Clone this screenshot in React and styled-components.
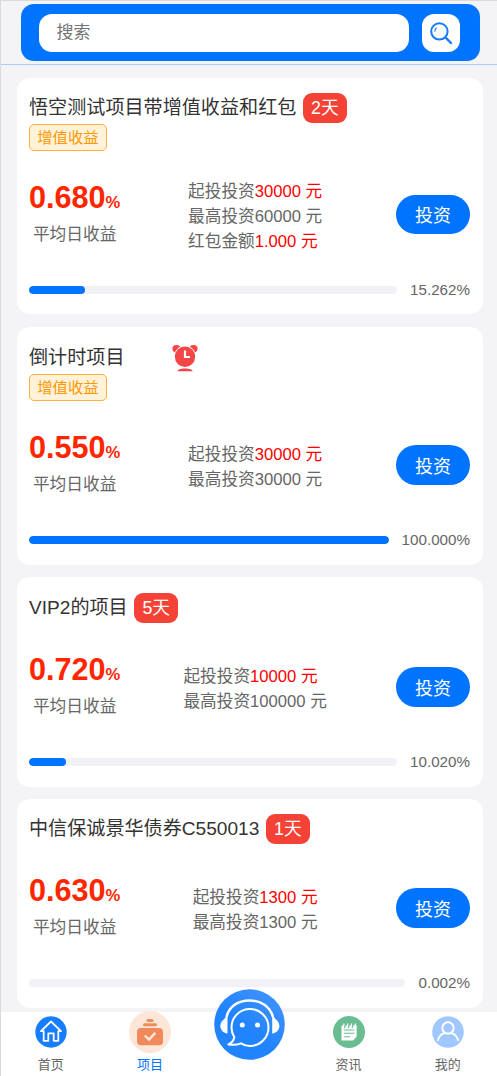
import React from 'react';
import styled, { createGlobalStyle, css } from 'styled-components';

const blue = '#0073ff';

const GlobalStyle = createGlobalStyle`
    * {
        box-sizing: border-box;
    }
    body {
        margin: 0;
        background: #f4f4f7;
        font-family: 'Liberation Sans', 'Noto Sans CJK SC', sans-serif;
        color: #666;
    }
`

const Page = styled.div`
    height: 1076px;
    display: flex;
    flex-direction: column;
    border-left: 1px solid #dcd8dc;
    border-top: 1px solid #dcd8dc;
    background: #f4f4f7;
    overflow: hidden;
`

const Header = styled.header`
    flex: none;
    height: 64px;
    padding: 3.3px 17.5px 0 19.5px;
    border-bottom: 1px solid #a9cef9;
`

const SearchBar = styled.div`
    height: 57px;
    display: flex;
    align-items: center;
    justify-content: space-between;
    padding: 0 19.5px 0 18.5px;
    border-radius: 13px;
    background: ${blue};
`

const SearchInput = styled.input`
    width: 370px;
    height: 38.5px;
    padding: 0 17.5px;
    border: 0;
    outline: none;
    border-radius: 13px;
    background: #fff;
    font-family: inherit;
    font-size: 17px;

    &::placeholder {
        color: #757575;
    }
`

const SearchButton = styled.button`
    width: 38.5px;
    height: 38.5px;
    display: flex;
    align-items: center;
    justify-content: center;
    padding: 0;
    border: 0;
    border-radius: 12px;
    background: #fff;
`

const List = styled.main`
    flex: 1;
    min-height: 0;
    display: flex;
    flex-direction: column;
    gap: 12.5px;
    padding: 13px 14px 0 16px;
    overflow: hidden;
`

const Card = styled.section`
    flex: none;
    height: ${({ size }) => size}px;
    display: flex;
    flex-direction: column;
    padding: 15.2px 13px 15.3px 12px;
    border-radius: 13px;
    background: #fff;
`

const TitleRow = styled.div`
    height: 30px;
    display: flex;
    align-items: center;
    margin-top: ${({ $offset = 0 }) => $offset}px;
`

const Title = styled.h3`
    margin: 0;
    font-size: 19.1px;
    line-height: 30px;
    font-weight: 400;
    color: #333;
    white-space: nowrap;
`

const Days = styled.span`
    height: 30px;
    margin-left: 6.8px;
    padding: 0 8px;
    border-radius: 9px;
    background: #f44336;
    color: #fff;
    font-size: 17.8px;
    line-height: 30px;
`

const AlarmBox = styled.span`
    display: flex;
    margin-left: 48px;
`

const Tag = styled.span`
    align-self: flex-start;
    height: 27px;
    margin-top: 1px;
    padding: 0 7.3px;
    border: 1px solid #ffb13b;
    border-radius: 5px;
    background: #fff2d9;
    color: #ff9800;
    font-size: 15.3px;
    line-height: 25px;
`

const Body = styled.div`
    height: 80px;
    display: flex;
    align-items: center;
    margin-top: auto;
    margin-bottom: 26px;
`

const Rate = styled.div`
    display: flex;
    flex-direction: column;
    align-items: center;
`

const RateValue = styled.div`
    color: #ff2600;
    font-size: 30.6px;
    line-height: 38px;
    font-weight: 700;

    small {
        font-size: 16.6px;
    }
`

const RateLabel = styled.div`
    font-size: 16.7px;
    line-height: 24px;
    margin-top: 1px;
    margin-bottom: 5px;
`

const Info = styled.div`
    flex: 1;
    display: flex;
    justify-content: center;
    padding: 4px 6px 0 0;
`

const InfoLine = styled.div`
    font-size: 16.65px;
    line-height: 25.2px;
    white-space: nowrap;

    span {
        ${({ red }) => red && css`
            color: #f00;
        `}
    }
`

const InvestButton = styled.button`
    width: 74px;
    height: 39.5px;
    padding: 0 0 1px;
    border: 0;
    border-radius: 20px;
    background: ${blue};
    color: #fff;
    font-family: inherit;
    font-size: 18px;
`

const ProgressRow = styled.div`
    height: 18px;
    display: flex;
    align-items: center;
    gap: 13px;
    font-size: 15.2px;
    line-height: 18px;
`

const Track = styled.div`
    flex: 1;
    height: 7.6px;
    border-radius: 4px;
    background: #f2f1f6;
    overflow: hidden;
`

const Fill = styled.div`
    height: 100%;
    border-radius: 4px;
    background: ${blue};
`

const TabBar = styled.nav`
    flex: none;
    height: 64px;
    display: grid;
    grid-template-columns: repeat(5, 99.3px);
    background: #fff;
`

const TabItem = styled.div`
    display: flex;
    flex-direction: column;
    align-items: center;
    color: ${({ active }) => active ? blue : '#666'};
    font-size: 13px;
    line-height: 20px;

    svg {
        display: block;
        margin-top: -1.3px;
        margin-bottom: 2px;
    }
`

// The chat bubble rises above the bar
const ChatButton = styled.div`
    position: relative;
    z-index: 1;
    margin-top: -23.5px;
    display: flex;
    justify-content: center;
    height: 71px;
`

const SearchIcon = () => (
    <svg width="24" height="24" viewBox="0 0 24 24" fill="none" stroke="#187bff" strokeLinecap="round">
        <circle cx="10.4" cy="10.4" r="8.2" strokeWidth="2" />
        <path d="M16.4 16.4l1.6 1.6" strokeWidth="1.6" />
        <path d="M17.7 17.7l4.3 4.3" strokeWidth="2.4" />
        <path d="M5.8 10.2c.1-1.4.7-2.5 1.5-3.2" strokeWidth="1.1" />
    </svg>
)

const AlarmIcon = () => (
    <svg width="26" height="28" viewBox="0 0 26 28" fill="#f44646">
        <ellipse cx="4.5" cy="4.7" rx="4.1" ry="3.7" />
        <ellipse cx="21.5" cy="4.7" rx="4.1" ry="3.7" />
        <circle cx="13" cy="12.8" r="11" fill="#fff" />
        <circle cx="13" cy="12.8" r="10.2" />
        <path d="M13 6.5v6.5h5" fill="none" stroke="#fff" strokeWidth="2.2" />
        <path d="M5.5 27.3c0-1.6 3-2.7 7.500-2.700s7.500 1.100 7.500 2.700z" />
    </svg>
)

const HomeIcon = () => (
    <svg width="42" height="42" viewBox="0 0 42 42" fill="none">
        <circle cx="21" cy="21" r="15.7" fill="#177dff" />
        <path d="M11 20.2L21 10.5l10 9.7h-2.7v9.6h-4.6v-7.5h-5.4v7.5h-4.6v-9.6z" stroke="#fff" strokeWidth="1.8" strokeLinejoin="round" />
    </svg>
)

const ProjectIcon = () => (
    <svg width="42" height="42" viewBox="0 0 42 42">
        <circle cx="21" cy="21" r="21" fill="#fbe6d7" />
        <g fill="#f08a5d">
            <rect x="17.5" y="8" width="7" height="3" rx="1.5" />
            <rect x="14" y="12.3" width="14" height="3" rx="1.5" />
            <rect x="8" y="17" width="26" height="17.3" rx="4" />
        </g>
        <path d="M15.8 24.5l4.2 4 6.3-6.6" fill="none" stroke="#fde9db" strokeWidth="2.4" />
    </svg>
)

const NewsIcon = () => (
    <svg width="42" height="42" viewBox="0 0 42 42">
        <circle cx="21" cy="21" r="16" fill="#69bd90" />
        <path d="M13.5 14.5h15.2v10.5l-4 4.5H13.5z" fill="#fff" />
        <path d="M16.2 12.5l-1 4M20 12.5l-1 4M23.8 12.5l-1 4M27.6 12.5l-1 4" stroke="#fff" strokeWidth="1.2" />
        <path d="M17.3 14l-.8 3M21.1 14l-.8 3M24.9 14l-.8 3M15.7 19h10.6M15.7 22.3h10.6M15.7 25.7h6.3" stroke="#69bd90" strokeWidth="1.1" fill="none" />
        <path d="M23.5 27.5l1.7 1.5 3-4" fill="none" stroke="#fff" strokeWidth="1" />
    </svg>
)

const MineIcon = () => (
    <svg width="42" height="42" viewBox="0 0 42 42" fill="none" stroke="#fff" strokeWidth="1.9" strokeLinecap="round">
        <circle cx="21" cy="21" r="15.8" fill="#a0c7ff" stroke="none" />
        <circle cx="21" cy="17" r="5.7" />
        <path d="M11 29.2c1-4.2 4-6.5 7.2-7.3M31 29.2c-1-4.2-4-6.5-7.2-7.3" />
    </svg>
)

const ChatIcon = () => (
    <svg width="71" height="71" viewBox="0 0 71 71" fill="none">
        <defs>
            <linearGradient id="chatFill" x1="1" y1="0" x2="0.5" y2="0.6">
                <stop offset="0" stopColor="#4796ff" />
                <stop offset="1" stopColor="#2084ff" />
            </linearGradient>
        </defs>
        <circle cx="35.5" cy="35.5" r="35.3" fill="url(#chatFill)" />
        <path d="M12.5 28C15 17.5 24 11.5 35.5 11.5S56 17.5 59 28" stroke="#fff" strokeWidth="2.5" />
        <path d="M13.5 25.5v19C8.5 44 6.3 40 6.3 37c0-3.5 2.2-5.3 4-7zM58.2 25.5v19c5-.5 7.2-4.5 7.2-7.5 0-3.5-2.2-5.3-4-7z" fill="#fff" />
        <path d="M27 54.3c2.7 1.7 5.7 2.7 9 2.7 10.300 0 18.5-8.3 18.5-18.5S46.3 20 36 20s-18.5 8.2-18.5 18.5c0 3.6 1 6.9 2.8 9.7-.6 3.3-2.7 5.8-5.8 7.3 4.7.6 9 .3 12.5-1.2z" stroke="#fff" strokeWidth="2" strokeLinejoin="round" />
        <circle cx="28.3" cy="36" r="2.5" fill="#fff" />
        <circle cx="43.5" cy="36" r="2.5" fill="#fff" />
    </svg>
)

const projects = [
    {
        title: '悟空测试项目带增值收益和红包',
        size: 236,
        days: '2天',
        tag: '增值收益',
        rate: '0.680',
        info: [['起投投资', '30000 元', true], ['最高投资', '60000 元'], ['红包金额', '1.000 元', true]],
        progress: '15.262',
    },
    {
        title: '倒计时项目',
        size: 238,
        offset: 1,
        alarm: true,
        tag: '增值收益',
        rate: '0.550',
        info: [['起投投资', '30000 元', true], ['最高投资', '30000 元']],
        progress: '100.000',
    },
    {
        title: 'VIP2的项目',
        size: 209.5,
        offset: 0.5,
        days: '5天',
        rate: '0.720',
        info: [['起投投资', '10000 元', true], ['最高投资', '100000 元']],
        progress: '10.020',
    },
    {
        title: '中信保诚景华债券C550013',
        size: 208.5,
        days: '1天',
        rate: '0.630',
        info: [['起投投资', '1300 元', true], ['最高投资', '1300 元']],
        progress: '0.002',
    },
]

const ProjectCard = ({ title, size, offset, days, alarm, tag, rate, info, progress }) => {
    return (
        <Card size={size}>
            <TitleRow $offset={offset}>
                <Title>{title}</Title>
                {days && <Days>{days}</Days>}
                {alarm && <AlarmBox><AlarmIcon /></AlarmBox>}
            </TitleRow>
            {tag && <Tag>{tag}</Tag>}
            <Body>
                <Rate>
                    <RateValue>{rate}<small>%</small></RateValue>
                    <RateLabel>平均日收益</RateLabel>
                </Rate>
                <Info>
                    <div>
                        {info.map(([label, value, red]) => (
                            <InfoLine key={label} red={red}>{label}<span>{value}</span></InfoLine>
                        ))}
                    </div>
                </Info>
                <InvestButton>投资</InvestButton>
            </Body>
            <ProgressRow>
                <Track>
                    <Fill style={{ width: `${progress}%` }} />
                </Track>
                {progress}%
            </ProgressRow>
        </Card>
    )
}

export default function App() {
    return (
        <>
            <GlobalStyle />
            <Page>
                <Header>
                    <SearchBar>
                        <SearchInput placeholder="搜索" />
                        <SearchButton><SearchIcon /></SearchButton>
                    </SearchBar>
                </Header>
                <List>
                    {projects.map((project) => (
                        <ProjectCard key={project.title} {...project} />
                    ))}
                </List>
                <TabBar>
                    <TabItem><HomeIcon />首页</TabItem>
                    <TabItem active><ProjectIcon />项目</TabItem>
                    <ChatButton><ChatIcon /></ChatButton>
                    <TabItem><NewsIcon />资讯</TabItem>
                    <TabItem><MineIcon />我的</TabItem>
                </TabBar>
            </Page>
        </>
    )
}
